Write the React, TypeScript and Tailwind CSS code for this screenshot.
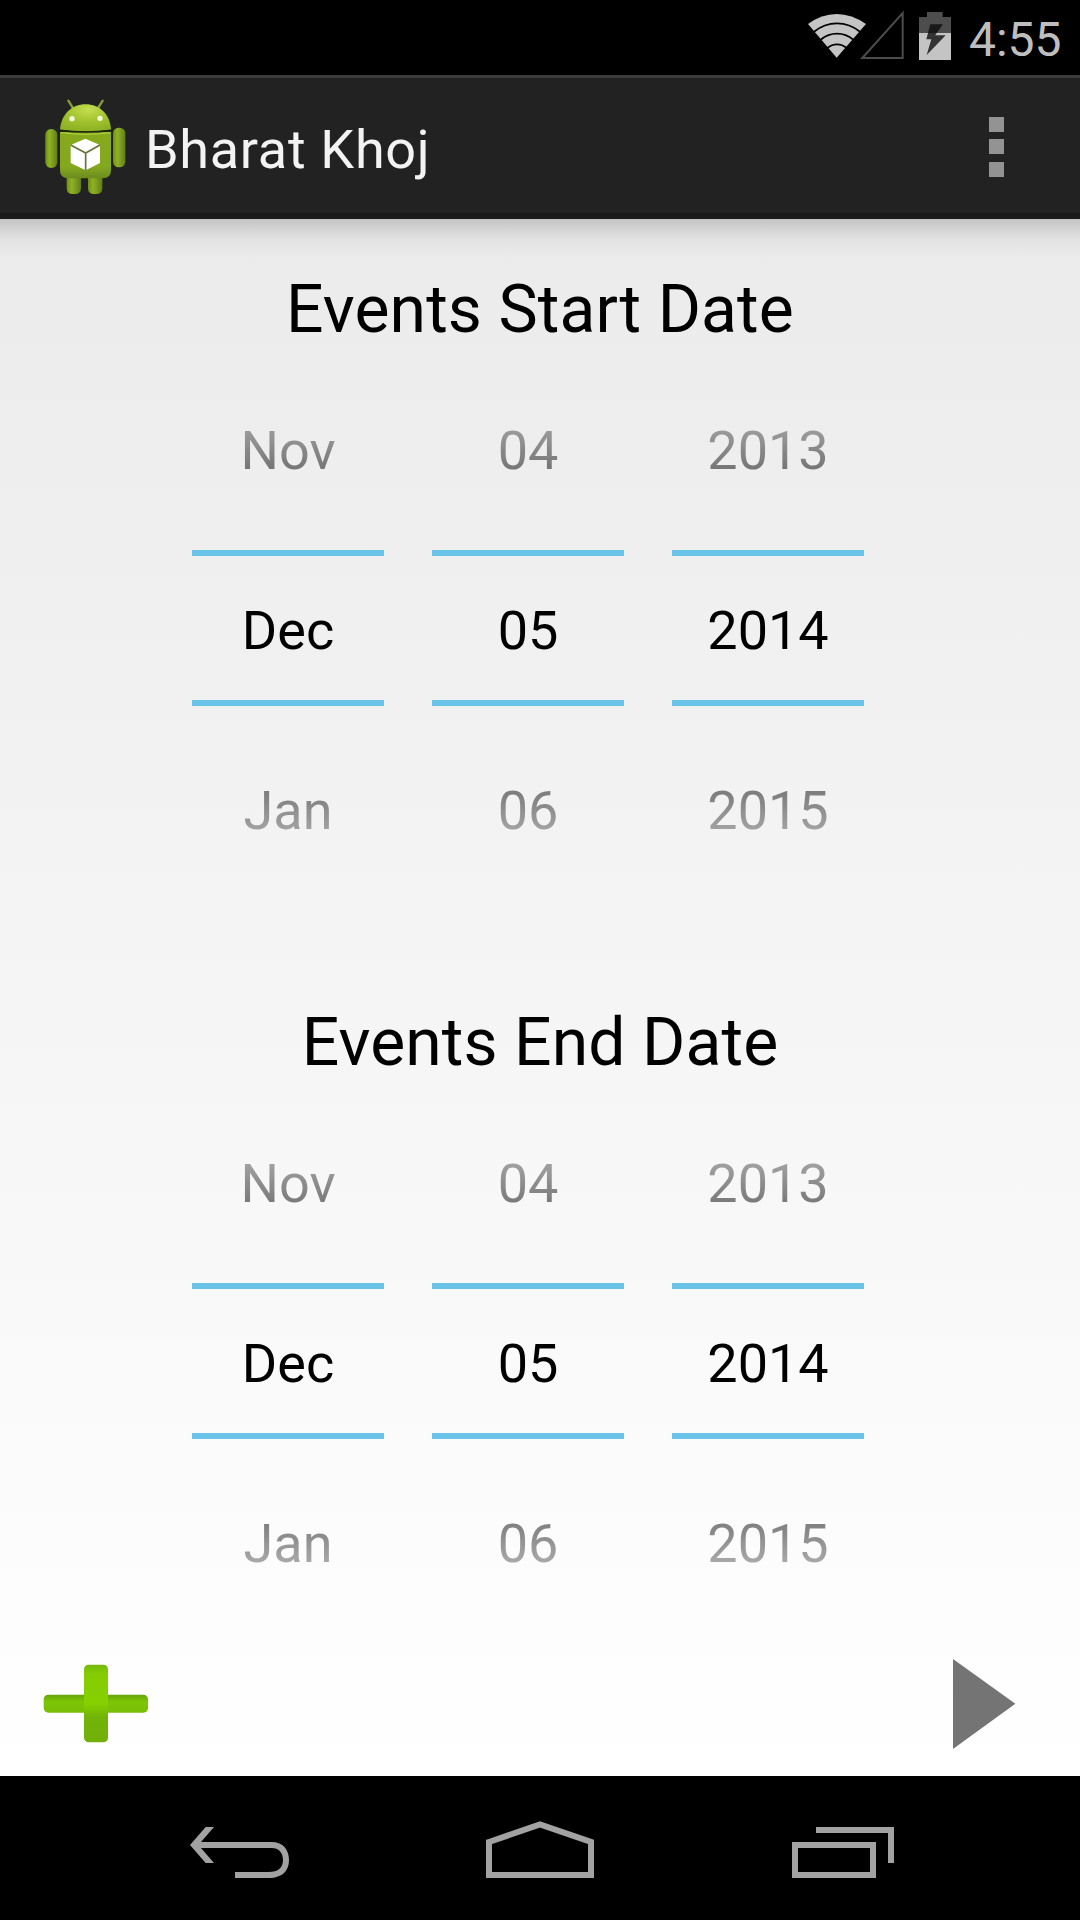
type PickerColumn = { before: string; selected: string; after: string }

const COLUMNS: PickerColumn[] = [
  { before: 'Nov', selected: 'Dec', after: 'Jan' },
  { before: '04', selected: '05', after: '06' },
  { before: '2013', selected: '2014', after: '2015' },
]

function WifiIcon() {
  return (
    <svg width="60" height="45" viewBox="0 0 180 135" className="shrink-0">
      <path d="M3 33Q44 3 89 3T177 33L89 134Z" fill="#c4c4c4" />
      <g fill="none" stroke="#000" strokeWidth="5.5">
        <path d="M21 56Q52 31 90 31T159 56" />
        <path d="M41 80Q63 62 90 62T139 80" />
        <path d="M61 105Q74 94 90 94T119 105" />
      </g>
    </svg>
  )
}

function SignalIcon() {
  return (
    <svg width="44" height="50" viewBox="0 0 132 150" className="shrink-0">
      <path d="M7 144L128 9V144Z" fill="none" stroke="#4c4c4c" strokeWidth="6" />
    </svg>
  )
}

function BatteryIcon() {
  return (
    <svg width="32" height="48" viewBox="0 0 96 144" className="shrink-0">
      <path d="M0 15H24V0H71V15H96V63H0Z" fill="#4d4d4d" />
      <path d="M0 63H96V144H0Z" fill="#c4c4c4" />
      <path d="M34 37H72L53 63H27Z" fill="#191919" />
      <path d="M27 63H53L49 70H80L23 129L37 82H22Z" fill="#333" />
    </svg>
  )
}

function StatusBar() {
  return (
    <div className="flex h-[75px] justify-end bg-black">
      <div className="mt-[13px] h-[45px] w-[53px]">
        <WifiIcon />
      </div>
      <div className="mt-[10px] w-[59px]">
        <SignalIcon />
      </div>
      <div className="mt-3 w-[50px]">
        <BatteryIcon />
      </div>
      <span className="mr-4 mt-3 w-[95px] whitespace-nowrap text-[48px] leading-[56px] text-[#bebebe]">
        4:55
      </span>
    </div>
  )
}

function AppIcon() {
  return (
    <svg width="96" height="96" viewBox="21 54 288 288" className="shrink-0">
      <defs>
        <linearGradient id="body" x1="0" y1="0" x2="0" y2="1">
          <stop offset="0" stopColor="#86a91d" />
          <stop offset="0.75" stopColor="#84a81e" />
          <stop offset="1" stopColor="#6b8b20" />
        </linearGradient>
        <linearGradient id="limb" x1="0" y1="0" x2="1" y2="0">
          <stop offset="0" stopColor="#6e9018" />
          <stop offset="0.35" stopColor="#8fb222" />
          <stop offset="1" stopColor="#607d1a" />
        </linearGradient>
        <radialGradient id="head" cx="0.55" cy="0.2" r="0.75">
          <stop offset="0" stopColor="#c6de51" />
          <stop offset="0.5" stopColor="#a5c630" />
          <stop offset="1" stopColor="#8fb325" />
        </radialGradient>
      </defs>
      <path d="M115 62L130 86M218 62L203 86" stroke="#829f3a" strokeWidth="7" strokeLinecap="round" />
      <path d="M110 260H153V324Q153 342 135 342H128Q110 342 110 324Z" fill="url(#limb)" />
      <path d="M174 260H217V324Q217 342 199 342H192Q174 342 174 324Z" fill="url(#limb)" />
      <rect x="46" y="147" width="36" height="117" rx="17" fill="url(#limb)" />
      <rect x="249" y="143" width="37" height="119" rx="17" fill="url(#limb)" />
      <path d="M90 156H243V270Q243 295 218 295H115Q90 295 90 270Z" fill="url(#body)" />
      <path d="M90 149C93 104 125 73 167 73S241 104 243 149Q167 160 90 149Z" fill="url(#head)" />
      <path d="M90 151Q167 161 243 151" fill="none" stroke="#1d2610" strokeWidth="5" />
      <path d="M92 158Q167 168 241 158" fill="none" stroke="#b0cd3d" strokeWidth="4" />
      <circle cx="126" cy="116" r="8" fill="#f4f8df" />
      <circle cx="210" cy="115" r="8" fill="#f4f8df" />
      <path d="M166 176L210 195V249L167 271L122 249V195Z" fill="#fff" />
      <path d="M122 195L167 219L210 195M167 219V271" fill="none" stroke="#66743c" strokeWidth="5" />
    </svg>
  )
}

function ActionBar() {
  return (
    <header className="flex h-36 items-center border-b-[6px] border-t-[3px] border-b-[#1a1a1a] border-t-[#3b3b3b] bg-[#222] pl-[37px] pr-[76px]">
      <AppIcon />
      <h1 className="ml-3 flex-1 pt-2 text-[54px] leading-[64px] tracking-[0.7px] text-[#f3f3f3]">Bharat Khoj</h1>
      <button type="button" aria-label="More options" className="mt-[2px] flex flex-col gap-[7.5px]">
        <span className="size-[15px] bg-[#939393]" />
        <span className="size-[15px] bg-[#939393]" />
        <span className="size-[15px] bg-[#939393]" />
      </button>
    </header>
  )
}

function DatePicker() {
  return (
    <div className="ml-48 flex h-[540px] gap-12">
      {COLUMNS.map((column) => (
        <div key={column.selected} className="grid w-48 text-center text-[54px] leading-[64px] text-black">
          <div className="col-start-1 row-start-1 flex flex-col gap-[116px] pt-[61px] [mask-image:linear-gradient(to_bottom,transparent_-12px,black_231px,black_309px,transparent_552px)]">
            <span>{column.before}</span>
            <span>{column.selected}</span>
            <span>{column.after}</span>
          </div>
          <div className="col-start-1 row-start-1 mt-48 h-[156px] border-y-[6px] border-[#6ac4e8]" />
        </div>
      ))}
    </div>
  )
}

function DateSection({ title }: { title: string }) {
  return (
    <section className="h-[733px]">
      <h2 className="mb-[9px] pt-[3px] text-center text-[66px] leading-[78px] tracking-[0.1px] text-black">{title}</h2>
      <DatePicker />
    </section>
  )
}

function BottomActions() {
  return (
    <div className="flex items-start justify-between pl-[43px] pr-[64px]">
      <button type="button" aria-label="Add">
        <svg width="106" height="79" viewBox="0 0 318 237">
          <defs>
            <linearGradient id="plus" x1="0" y1="0" x2="0" y2="1">
              <stop offset="0" stopColor="#75b80a" />
              <stop offset="0.12" stopColor="#83cd02" />
              <stop offset="0.5" stopColor="#86d001" />
              <stop offset="0.68" stopColor="#72b307" />
              <stop offset="1" stopColor="#72b00a" />
            </linearGradient>
            <linearGradient id="plus-arm" x1="0" y1="0" x2="0" y2="1">
              <stop offset="0" stopColor="#68a30b" />
              <stop offset="0.4" stopColor="#7cc604" />
              <stop offset="1" stopColor="#79bd07" />
            </linearGradient>
          </defs>
          <rect x="2" y="92" width="313" height="54" rx="14" fill="url(#plus-arm)" />
          <rect x="123" y="2" width="72" height="233" rx="14" fill="url(#plus)" />
        </svg>
      </button>
      <button type="button" aria-label="Next" className="-mt-[6px]">
        <svg width="64" height="92" viewBox="0 0 192 276">
          <path d="M3 3L190 137L3 273Z" fill="#747474" />
        </svg>
      </button>
    </div>
  )
}

function NavigationBar() {
  return (
    <nav className="flex h-36 items-start bg-black pl-[190px] pt-[45px]">
      <svg width="100" height="58" viewBox="0 0 300 174" className="mt-[6px]">
        <path d="M47 0H72L33 45H245C280 45 297 69 297 99S280 153 235 153H135V135H235C266 135 279 121 279 99S266 63 245 63H33L72 108H47L0 54Z" fill="#a2a2a2" />
      </svg>
      <svg width="108" height="57" viewBox="0 0 324 171" className="ml-[196px]">
        <path d="M9 63L162 10L315 63V162H9Z" fill="none" stroke="#a2a2a2" strokeWidth="18" />
      </svg>
      <svg width="102" height="51" viewBox="0 0 306 153" className="ml-[198px] mt-[6px]">
        <path d="M9 54H243V144H9ZM72 9H297V108" fill="none" stroke="#a2a2a2" strokeWidth="18" />
      </svg>
    </nav>
  )
}

export default function App() {
  return (
    <div className="flex h-[1920px] w-[1080px] flex-col overflow-hidden bg-black font-['Roboto',sans-serif]">
      <StatusBar />
      <ActionBar />
      <main className="flex-1 bg-linear-to-b from-[#ebebeb] to-white">
        <div className="h-[49px] bg-linear-to-b from-black/17 via-black/4 via-40% to-transparent to-80%" />
        <DateSection title="Events Start Date" />
        <DateSection title="Events End Date" />
        <div className="-mt-[70px]">
          <BottomActions />
        </div>
      </main>
      <NavigationBar />
    </div>
  )
}
